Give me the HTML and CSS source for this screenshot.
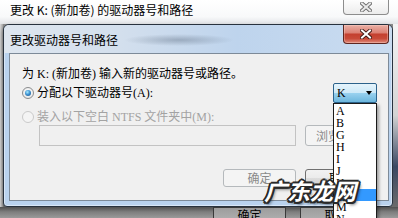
FILE: index.html
```html
<!DOCTYPE html>
<html lang="zh-CN">
<head>
<meta charset="utf-8">
<title>更改驱动器号和路径</title>
<link rel="stylesheet" href="styles.css">
</head>
<body>
<div class="screen">
  <div class="bg-title">
    <span class="bg-title-text">更改 K: (新加卷) 的驱动器号和路径</span>
    <div class="bg-close">
      <svg width="12" height="10" viewBox="0 0 12 10"><path d="M2 1.5 L10 8.5 M10 1.5 L2 8.5" stroke="#6a6a6a" stroke-width="3.8" stroke-linecap="square" fill="none"/><path d="M2 1.5 L10 8.5 M10 1.5 L2 8.5" stroke="#e9e9e9" stroke-width="2" stroke-linecap="square" fill="none"/></svg>
    </div>
  </div>
  <div class="mid">
    <div class="edge-left"></div>
    <div class="dlg">
      <div class="dlg-title">
        <span class="dlg-title-text">更改驱动器号和路径</span>
        <div class="dlg-close">
          <svg width="12" height="10" viewBox="0 0 12 10"><path d="M2 1.5 L10 8.5 M10 1.5 L2 8.5" stroke="#3d1712" stroke-width="3.8" stroke-linecap="square" fill="none"/><path d="M2 1.5 L10 8.5 M10 1.5 L2 8.5" stroke="#ffffff" stroke-width="2" stroke-linecap="square" fill="none"/></svg>
        </div>
      </div>
      <div class="client">
        <p class="intro">为 K: (新加卷) 输入新的驱动器号或路径。</p>
        <div class="opt opt-assign">
          <span class="radio checked"></span>
          <span class="opt-label">分配以下驱动器号(A):</span>
          <div class="combo">
            <span class="combo-value">K</span>
            <span class="combo-arrow"></span>
            <ul class="combo-list">
              <li>A</li>
              <li>B</li>
              <li>G</li>
              <li>H</li>
              <li>I</li>
              <li>J</li>
              <li>K</li>
              <li class="hot">L</li>
              <li>M</li>
              <li>N</li>
            </ul>
          </div>
        </div>
        <div class="opt opt-mount is-disabled">
          <span class="radio"></span>
          <span class="opt-label">装入以下空白 NTFS 文件夹中(M):</span>
        </div>
        <div class="path-row">
          <div class="textbox"></div>
          <button class="btn btn-browse" disabled>浏览(B)...</button>
        </div>
        <div class="actions">
          <button class="btn btn-ok" disabled>确定</button>
          <button class="btn btn-cancel">取消</button>
        </div>
      </div>
    </div>
    <div class="edge-right"></div>
  </div>
  <div class="bg-footer">
    <span class="bg-btn">确定</span>
    <span class="bg-btn">取消</span>
  </div>
  <div class="watermark">广东龙网</div>
</div>
</body>
</html>
```

FILE: styles.css
```css
* { box-sizing: border-box; }
html, body { margin: 0; padding: 0; }
body {
  width: 398px;
  height: 218px;
  overflow: hidden;
  background: #8c8c8c;
  font-family: "Noto Sans CJK SC", "Noto Sans", sans-serif;
  font-size: 12px;
  color: #000;
}
.screen {
  position: relative;
  width: 398px;
  height: 218px;
  overflow: hidden;
  display: flex;
  flex-direction: column;
}

/* background (outer) window */
.bg-title {
  height: 24px;
  flex: none;
  display: flex;
  align-items: flex-start;
  background: linear-gradient(#ffffff 0%, #f8f9fa 70%, #e2e4e7 100%);
}
.bg-title-text {
  margin: 3px 0 0 10px;
  line-height: 14px;
  white-space: nowrap;
}
.bg-close {
  margin-left: auto;
  margin-right: 9px;
  width: 46px;
  height: 15px;
  border: 1px solid #8d8d8d;
  border-top: none;
  border-radius: 0 0 4px 4px;
  background: linear-gradient(#fdfdfd, #ececec);
  display: flex;
  justify-content: center;
  align-items: center;
}
.bg-close svg { display: block; }

.mid {
  height: 183px;
  flex: none;
  display: flex;
}
.edge-left {
  width: 3px;
  background: linear-gradient(90deg, #dadada, #a4a4a4);
}
.edge-right {
  width: 5px;
  background: linear-gradient(#f4f4f4 0%, #d3d3d3 50%, #3a4863 78%, #6b6b6b 100%);
}

/* dialog */
.dlg {
  width: 390px;
  height: 183px;
  border: 1px solid #28323e;
  border-radius: 6px 6px 4px 4px;
  padding: 0 3px 5px 5px;
  background: #b9d2ee;
  display: flex;
  flex-direction: column;
  box-shadow: inset 0 0 0 1px rgba(255, 255, 255, 0.45), 0 3px 5px rgba(0, 0, 0, 0.45);
}
.dlg-title {
  height: 28px;
  flex: none;
  margin: 0 -3px 0 -5px;
  padding: 0 3px 0 5px;
  display: flex;
  align-items: flex-start;
  border-radius: 5px 5px 0 0;
  background:
    radial-gradient(ellipse 55px 6px at 175px 15px, rgba(70, 85, 105, 0.35), rgba(70, 85, 105, 0)),
    linear-gradient(90deg, #dee6ef 0%, #d3dfed 30%, #bed4ed 60%, #cadcf0 100%);
}
.dlg-title-text {
  margin: 8px 0 0 1px;
  line-height: 14px;
  white-space: nowrap;
}
.dlg-close {
  margin-left: auto;
  width: 46px;
  height: 19px;
  border: 1px solid #5e2620;
  border-top: none;
  border-radius: 0 0 4px 4px;
  background: linear-gradient(#eab0a6 0%, #dc8275 42%, #c4402f 52%, #c84a38 75%, #e08a7a 100%);
  box-shadow: inset 0 0 0 1px rgba(255, 220, 210, 0.35);
  display: flex;
  justify-content: center;
  align-items: center;
}
.dlg-close svg { display: block; margin-top: -1px; }

.client {
  flex: 1;
  border: 1px solid #7d8a98;
  background: #f0f0f0;
  padding: 13px 11px 0 12px;
  display: flex;
  flex-direction: column;
  font-family: "Liberation Serif", "Noto Sans CJK SC", serif;
}
.intro {
  margin: 0;
  height: 14px;
  line-height: 14px;
  white-space: nowrap;
}
.opt {
  display: flex;
  align-items: center;
  white-space: nowrap;
}
.opt-assign {
  margin-top: 2px;
  height: 20px;
}
.opt-mount {
  margin-top: 7px;
  height: 14px;
}
.opt-label { line-height: 14px; }
.is-disabled .opt-label { color: #a3a3a3; }

.radio {
  width: 12px;
  height: 12px;
  flex: none;
  margin-right: 3px;
  border-radius: 50%;
  border: 1px solid #8a8c8e;
  background: radial-gradient(circle at 50% 40%, #ffffff 0%, #e9e9e9 70%, #d4d4d4 100%);
  display: flex;
  justify-content: center;
  align-items: center;
}
.radio.checked::after {
  content: "";
  width: 6px;
  height: 6px;
  border-radius: 50%;
  background: radial-gradient(circle at 40% 35%, #a8ecff 0%, #3f93d2 45%, #114a85 100%);
}
.is-disabled .radio {
  border-color: #cacaca;
  background: #f4f4f4;
}

/* combo box */
.combo {
  position: relative;
  margin-left: auto;
  width: 44px;
  height: 20px;
  border: 1px solid #2c628b;
  border-radius: 2px;
  background: linear-gradient(#e5f4fc 0%, #cde9f8 48%, #98d1ef 52%, #6cb6dd 100%);
  display: flex;
  align-items: center;
  padding: 0 4px 0 3px;
}
.combo-value {
  line-height: 14px;
  font-size: 12px;
}
.combo-arrow {
  margin-left: auto;
  width: 0;
  height: 0;
  border-left: 3.5px solid transparent;
  border-right: 3.5px solid transparent;
  border-top: 4px solid #000;
}
.combo-list {
  position: absolute;
  z-index: 10;
  left: -1px;
  top: 19px;
  width: 44px;
  margin: 0;
  padding: 1px 0 0;
  list-style: none;
  background: #fff;
  border: 1px solid #1a1a1a;
  box-shadow: 2px 2px 3px rgba(0, 0, 0, 0.35);
}
.combo-list li {
  height: 12px;
  line-height: 12px;
  padding-left: 2px;
  font-size: 12px;
}
.combo-list li.hot {
  background: #3399ff;
  color: #fff;
}

/* path row */
.path-row {
  margin-top: 1px;
  height: 21px;
  display: flex;
  padding-left: 17px;
}
.textbox {
  width: 257px;
  height: 21px;
  border: 1px solid #c3c3c3;
  background: #f0f0f0;
}

.btn {
  margin: 0;
  padding: 0;
  font-family: "Noto Sans CJK SC", "Noto Sans", sans-serif;
  font-size: 12px;
  line-height: 14px;
  color: #000;
  border: 1px solid #707070;
  border-radius: 3px;
  background: linear-gradient(#f2f2f2 0%, #ebebeb 49%, #dddddd 51%, #cfcfcf 100%);
  white-space: nowrap;
}
.btn:disabled {
  color: #8a8a8a;
  border-color: #b5b9bc;
  background: #f4f4f4;
}
.btn-browse {
  margin-left: auto;
  width: 72px;
  height: 21px;
}
.actions {
  margin-top: 23px;
  display: flex;
  justify-content: flex-end;
  gap: 9px;
}
.btn-ok { width: 73px; height: 18px; }
.btn-cancel { width: 72px; height: 18px; }

/* outer window footer */
.bg-footer {
  height: 11px;
  flex: none;
  display: flex;
  gap: 14px;
  padding-left: 213px;
  overflow: hidden;
  background: linear-gradient(#4f4f4f 0%, #7e7e7e 45%, #9a9a9a 100%);
}
.bg-btn {
  width: 73px;
  height: 14px;
  flex: none;
  border: 1px solid #3a3a3a;
  border-bottom: none;
  background: linear-gradient(#9d9d9d, #b0b0b0);
  text-align: center;
  line-height: 14px;
  color: #000;
}

/* watermark overlay */
.watermark {
  position: absolute;
  z-index: 20;
  left: 264px;
  top: 177px;
  font-family: "Noto Sans CJK SC", sans-serif;
  font-size: 23px;
  line-height: 26px;
  font-weight: 700;
  font-style: italic;
  color: #ffffff;
  white-space: nowrap;
  text-shadow:
    -2px 0 #2a2a2a, 2px 0 #2a2a2a, 0 -2px #2a2a2a, 0 2px #2a2a2a,
    -1.5px -1.5px #2a2a2a, 1.5px 1.5px #2a2a2a, -1.5px 1.5px #2a2a2a, 1.5px -1.5px #2a2a2a,
    2px 3px 3px rgba(0, 0, 0, 0.5);
}
```
